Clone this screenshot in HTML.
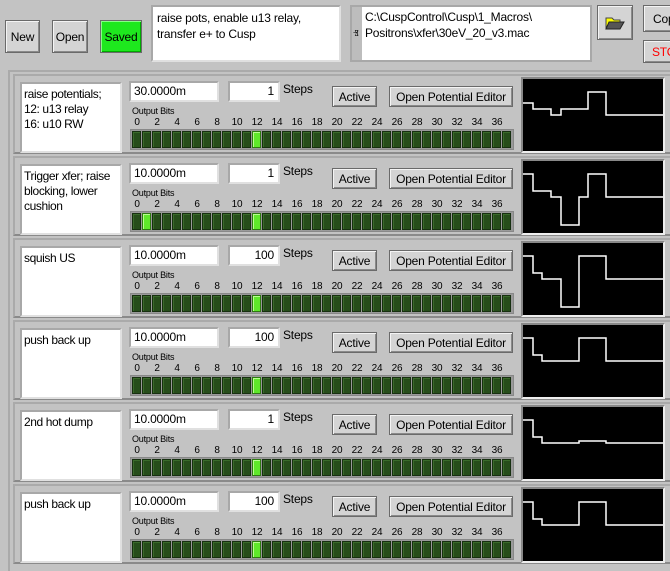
<!DOCTYPE html>
<html><head><meta charset="utf-8"><style>
*{box-sizing:border-box}
body{margin:0;width:670px;height:571px;overflow:hidden;background:#c3c3c3;font-family:"Liberation Sans",sans-serif;font-size:12px;color:#000;position:relative;letter-spacing:-0.2px}
.a{position:absolute}
.btn{position:absolute;background:#d4d4d4;border:1px solid #6a6a6a;box-shadow:inset 1px 1px 0 #f4f4f4,inset -1px -1px 0 #8a8a8a;display:flex;align-items:center;justify-content:center;font-size:12px}
.wb{position:absolute;background:#fff;border:2px solid #a8a8a8;border-right-color:#e0e0e0;border-bottom-color:#e0e0e0}
.row{position:absolute;left:13px;width:657px;height:80px;border:2px solid #aaa;border-right:none;border-bottom-color:#8a8a8a;background:#c3c3c3}
.led{position:absolute;top:0;width:9px;height:17px;background:#264d1a;border:1px solid #173010;box-shadow:inset 1px 1px 0 #3a6a2a}
.led.on{background:#5fe82a;box-shadow:inset 1px 1px 0 #b8ff90;border-color:#2d7a10}
</style></head><body>
<div class="btn" style="left:5px;top:20px;width:35px;height:33px">New</div>
<div class="btn" style="left:52px;top:20px;width:36px;height:33px">Open</div>
<div class="btn" style="left:100px;top:20px;width:42px;height:33px;background:#1ee81e;box-shadow:inset 1px 1px 0 #8f8,inset -1px -1px 0 #0a0">Saved</div>
<div class="wb" style="left:151px;top:5px;width:190px;height:57px;padding:3px 4px;font-size:12px;line-height:16px">raise pots, enable u13 relay,<br>transfer e+ to Cusp</div>
<div class="a" style="left:350px;top:5px;width:242px;height:57px;background:#bdbdbd;border:2px solid #a8a8a8"></div>
<div class="a" style="left:362px;top:7px;width:228px;height:53px;background:#fff;padding:2px 3px;font-size:12px;line-height:16px">C:\CuspControl\Cusp\1_Macros\<br>Positrons\xfer\30eV_20_v3.mac</div>
<div class="a" style="left:353px;top:28px;font-size:9px">&#x2C20;</div>
<div class="btn" style="left:597px;top:5px;width:36px;height:35px"><svg width="20" height="14"><path d="M1 2h6l2 2h6v3H4L1 12z" fill="#ff0" stroke="#444"/><path d="M4 6h15l-4 7H1z" fill="#555" stroke="#222"/></svg></div>
<div class="btn" style="left:643px;top:5px;width:30px;height:27px;justify-content:flex-start;padding-left:9px">Cop</div>
<div class="btn" style="left:643px;top:40px;width:30px;height:23px;justify-content:flex-start;padding-left:8px;color:#f00">STOP</div>
<div class="a" style="left:8px;top:70px;width:662px;height:501px;border:2px solid #aaa;border-right:none;border-bottom:none;background:#c3c3c3"></div>
<div id="rows"></div>
<script>
var data=[
["raise potentials;<br>12: u13 relay<br>16: u10 RW","30.0000m","1",[12],"M0,24H10V30H28V36H38V30H65V13H83V36H140"],
["Trigger xfer; raise<br>blocking, lower<br>cushion","10.0000m","1",[1,12],"M0,13H10V30H28V36H38V64H56V36H65V13H83V36H140"],
["squish US","10.0000m","100",[12],"M0,13H10V30H19V36H38V64H56V13H83V36H140"],
["push back up","10.0000m","100",[12],"M0,13H10V30H19V36H56V13H83V36H140"],
["2nd hot dump","10.0000m","1",[12],"M0,13H10V30H19V36H56V34H83V36H140"],
["push back up","10.0000m","100",[12],"M0,13H10V30H19V36H56V13H83V36H140"]];
var h="";
data.forEach(function(d,k){
var t=74+82*k;
h+='<div class="row" style="top:'+t+'px"></div>';
h+='<div class="wb" style="left:20px;top:'+(t+8)+'px;width:102px;height:71px;padding:3px 2px;font-size:12px;line-height:15px;letter-spacing:-0.4px;white-space:nowrap;overflow:hidden">'+d[0]+'</div>';
h+='<div class="wb" style="left:129px;top:'+(t+7)+'px;width:90px;height:21px;padding:1px 3px;font-size:12px">'+d[1]+'</div>';
h+='<div class="wb" style="left:228px;top:'+(t+7)+'px;width:52px;height:21px;padding:1px 4px;text-align:right;font-size:12px">'+d[2]+'</div>';
h+='<div class="a" style="left:283px;top:'+(t+8)+'px;font-size:12px">Steps</div>';
h+='<div class="btn" style="left:332px;top:'+(t+12)+'px;width:45px;height:21px">Active</div>';
h+='<div class="btn" style="left:389px;top:'+(t+12)+'px;width:124px;height:21px">Open Potential Editor</div>';
h+='<div class="a" style="left:132px;top:'+(t+32)+'px;font-size:9px">Output Bits</div>';
for(var i=0;i<38;i+=2)h+='<div class="a" style="left:'+(127+10*i)+'px;width:20px;text-align:center;top:'+(t+43)+'px;font-size:10px">'+i+'</div>';
h+='<div class="a" style="left:130px;top:'+(t+55)+'px;width:384px;height:21px;background:#9a9a9a;border:1px solid #888"><div class="a" style="left:1px;top:1px">';
for(var i=0;i<38;i++)h+='<div class="led'+(d[3].indexOf(i)>=0?' on':'')+'" style="left:'+(10*i)+'px"></div>';
h+='</div></div>';
h+='<div class="a" style="left:521px;top:'+(t+3)+'px;width:144px;height:76px;background:#000;border:2px solid #888;border-right-color:#eee;border-bottom-color:#eee"><svg width="140" height="72" style="position:absolute;left:0;top:0"><path d="'+d[4]+'" fill="none" stroke="#fff" stroke-width="1.5"/></svg></div>';
});
document.getElementById("rows").innerHTML=h;
</script>
</body></html>
